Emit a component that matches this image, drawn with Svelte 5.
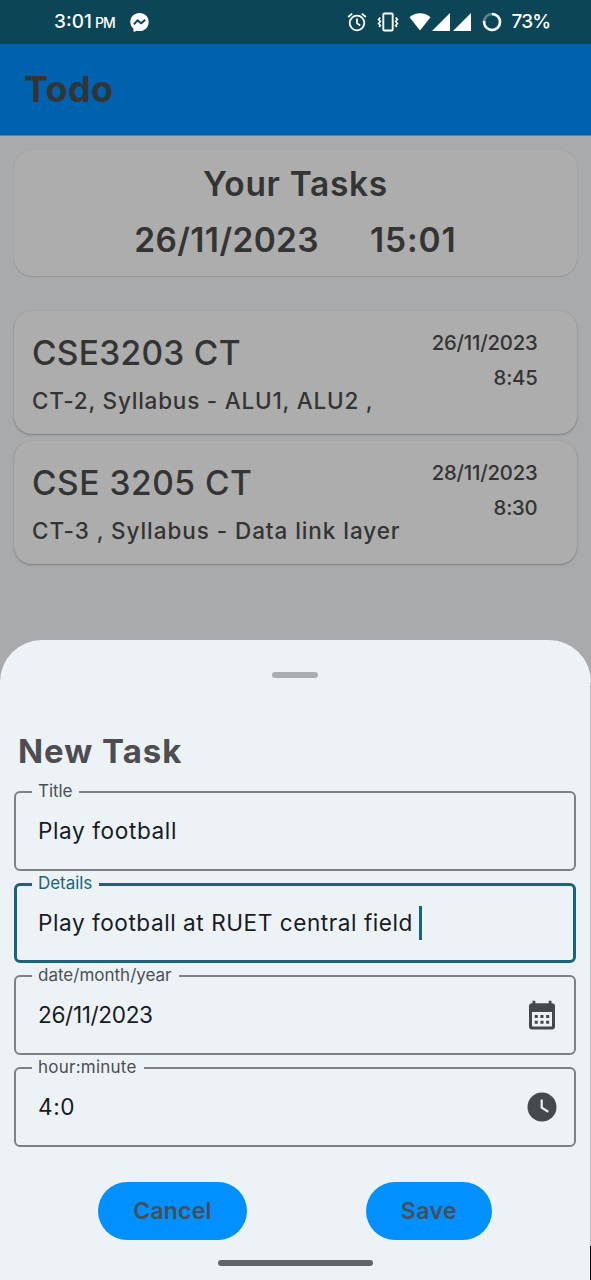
<script>
  const tasks = [
    { title: 'CSE3203 CT', details: 'CT-2, Syllabus - ALU1, ALU2 ,', date: '26/11/2023', time: '8:45', kind: 'first' },
    { title: 'CSE 3205 CT', details: 'CT-3 , Syllabus - Data link layer', date: '28/11/2023', time: '8:30', kind: 'second' }
  ];
  const fields = [
    { label: 'Title', value: 'Play football' },
    { label: 'Details', value: 'Play football at RUET central field', focused: true },
    { label: 'date/month/year', value: '26/11/2023', icon: 'calendar', numeric: true },
    { label: 'hour:minute', value: '4:0', icon: 'clock' }
  ];
</script>

<div class="screen">
  <header class="status">
    <span class="clock">3:01</span><span class="pm">PM</span>
    <svg class="messenger" width="19" height="19" viewBox="0 0 19 19">
      <path fill="#fff" d="M9.5 0C4.1 0 .3 3.9.3 8.9c0 2.700 1.200 5 3.100 6.600v2.600c0 .5.500.800 1 .6l2.200-1c.9.3 1.900.4 2.900.4 5.400 0 9.200-3.900 9.200-9.100S14.900 0 9.500 0z" />
      <path fill="none" stroke="#0c4556" stroke-width="2" stroke-linejoin="round" d="M3.900 11.300 7.500 7.300l3.700 3 4-3.600" />
    </svg>
    <div class="indicators">
      <svg class="alarm" width="20" height="20" viewBox="0 0 20 20" fill="none" stroke="#fff" stroke-width="1.800">
        <circle cx="10" cy="11" r="7.300" />
        <path d="M10 6.600v4.700l3.200 2.100M1.200 5 5.200 1.600M18.800 5l-4-3.400" />
      </svg>
      <svg class="vibrate" width="22" height="20" viewBox="0 0 22 20" fill="none" stroke="#fff" stroke-width="1.900">
        <rect x="6.300" y="1.500" width="9.400" height="17" rx="1" />
        <path stroke-width="1.700" d="M3.300 5.500 1.600 7.500l1.700 2-1.700 2 1.700 2-1.200 1.600M18.700 5.500l1.700 2-1.700 2 1.700 2-1.700 2 1.200 1.600" />
      </svg>
      <svg class="wifi" width="22" height="18" viewBox="0 0 22 18"><path fill="#fff" d="M.5 4.200C6-1 16-1 21.500 4.200L11 17.500z" /></svg>
      <svg class="signal" width="18" height="18" viewBox="0 0 18 18"><path fill="#fff" d="M18 0v18H0z" /></svg>
      <svg class="signal" width="18" height="18" viewBox="0 0 18 18"><path fill="#fff" d="M18 0v18H0z" /></svg>
      <svg class="battery" width="20" height="20" viewBox="0 0 20 20" fill="none" stroke-width="2.600">
        <circle cx="10" cy="10" r="8" stroke="#5f8590" />
        <path stroke="#fff" d="M10 2A8 8 0 1 1 2.100 9" />
      </svg>
      <span class="percent">73%</span>
    </div>
  </header>

  <div class="appbar"><h1>Todo</h1></div>

  <main>
    <section class="card summary">
      <div class="heading">Your Tasks</div>
      <div class="now"><span class="today">26/11/2023</span><span class="hour">15:01</span></div>
    </section>
    {#each tasks as task}
      <article class="card task {task.kind}">
        <div class="info">
          <div class="name">{task.title}</div>
          <div class="details">{task.details}</div>
        </div>
        <div class="due"><span class="date">{task.date}</span><span class="time">{task.time}</span></div>
      </article>
    {/each}
  </main>

  <section class="sheet">
    <div class="handle"></div>
    <h2>New Task</h2>
    <div class="fields">
      {#each fields as field}
        <div class="field" class:focused={field.focused}>
          <span class="label" class:tight={!field.icon} class:wide={field.icon === 'clock'}>{field.label}</span>
          <span class="value" class:numeric={field.numeric}>{field.value}</span>
          {#if field.focused}<i class="caret"></i>{/if}
          {#if field.icon === 'calendar'}
            <svg class="icon" width="30" height="30" viewBox="0 0 30 30">
              <path fill="#43494d" fill-rule="evenodd" d="M5.500.700h2.800v2.600h13.400V.700h2.800v2.600H25A3 3 0 0 1 28 6.300v20.200a3 3 0 0 1-3 3H5a3 3 0 0 1-3-3V6.300a3 3 0 0 1 3-3h.500zM5 12v13.500c0 .6.400 1 1 1h18c.6 0 1-.4 1-1V12z" />
              <path fill="#43494d" d="M7.700 15h3.100v3H7.700zm5.700 0h3.100v3h-3.100zm5.700 0h3.100v3h-3.100zM7.700 20.700h3.100v3H7.700zm5.700 0h3.100v3h-3.100zm5.700 0h3.100v3h-3.100z" />
            </svg>
          {:else if field.icon === 'clock'}
            <svg class="icon" width="30" height="30" viewBox="0 0 30 30">
              <circle cx="15" cy="15" r="14.500" fill="#43494d" />
              <path fill="none" stroke="#edf2f7" stroke-width="2.200" d="M14.700 7.500v8.200l6.600 4" />
            </svg>
          {/if}
        </div>
      {/each}
    </div>
    <div class="actions">
      <button class="cancel">Cancel</button>
      <button class="save">Save</button>
    </div>
    <div class="gesture"></div>
  </section>
  <div class="edge"></div>
</div>

<style>
  :global(body) { background: #a9aaad; }
  .screen {
    position: relative;
    display: flex;
    flex-direction: column;
    width: 591px;
    height: 1280px;
    overflow: hidden;
    background: #a9aaac;
    color: #343434;
    font-family: Inter, sans-serif;
    white-space: nowrap;
  }
  .status {
    box-sizing: border-box;
    display: flex;
    align-items: center;
    height: 44px;
    padding-left: 54px;
    background: #0c4556;
    color: #fff;
    font-size: 19px;
    font-weight: 500;
    line-height: 44px;
  }
  .clock { width: 41px; }
  .pm { width: 34.700px; font-size: 14px; letter-spacing: -1.100px; padding-top: 2px; }
  .messenger { margin-top: 1px; }
  .indicators { display: flex; align-items: center; margin-left: auto; width: 244px; }
  .vibrate { margin-left: 10px; }
  .wifi { margin-left: 10px; }
  .signal { margin-left: 1px; }
  .signal + .signal { margin-left: 3px; }
  .battery { margin-left: 11px; }
  .percent { margin-left: 9.500px; letter-spacing: -.900px; }
  .appbar {
    display: flex;
    align-items: center;
    height: 91px;
    padding-left: 24px;
    border-bottom: 1px solid #4b83b1;
    background: #0062ae;
  }
  h1 { margin: 0 0 1px; font-size: 36px; font-weight: 700; letter-spacing: .300px; }
  main { display: flex; flex-direction: column; padding: 14px 14px 0; }
  .card {
    box-sizing: border-box;
    border-radius: 18px;
    background: #adadad;
    box-shadow: 0 1px 2px rgba(70, 75, 80, .45), 0 0 1px rgba(90, 95, 100, .25);
  }
  .summary {
    display: flex;
    flex-direction: column;
    align-items: center;
    gap: 16px;
    height: 126px;
    margin-bottom: 35px;
    padding-top: 14px;
    font-size: 33.500px;
    font-weight: 600;
    line-height: 40px;
    box-shadow: 0 1px 1px rgba(70, 75, 80, .2), 0 0 1px rgba(90, 95, 100, .3);
  }
  .heading { letter-spacing: .680px; }
  .now { display: flex; gap: 51px; }
  .today { letter-spacing: .350px; }
  .hour { letter-spacing: .900px; }
  .task {
    display: flex;
    justify-content: space-between;
    height: 123px;
    margin-bottom: 7px;
    padding: 22px 39.500px 0 18px;
    font-weight: 500;
  }
  .name { font-size: 33.500px; line-height: 40px; letter-spacing: .280px; }
  .second .name { letter-spacing: .530px; }
  .details { margin-top: 13px; font-size: 22.500px; line-height: 30px; letter-spacing: .780px; }
  .second .details { letter-spacing: .930px; }
  .due {
    display: flex;
    flex-direction: column;
    align-items: flex-end;
    gap: 9px;
    margin-top: -3px;
    font-size: 20.300px;
    line-height: 26px;
    letter-spacing: -.210px;
  }
  .sheet {
    position: absolute;
    inset: 640px 0 0 0;
    box-sizing: border-box;
    display: flex;
    flex-direction: column;
    padding: 32px 15px 0 14px;
    border-radius: 42px 42px 0 0;
    background: #edf2f7;
    color: #4f4d4f;
  }
  .handle { width: 46px; height: 6px; margin-left: 258px; border-radius: 3px; background: #aaaeb2; }
  h2 { margin: 53px 0 20px 4px; font-size: 33px; font-weight: 700; line-height: 40px; letter-spacing: .970px; }
  .fields { display: flex; flex-direction: column; gap: 12px; }
  .field {
    position: relative;
    box-sizing: border-box;
    display: flex;
    align-items: center;
    height: 80px;
    padding: 0 17px 0 22px;
    border: 2px solid #7b8186;
    border-radius: 6px;
    color: #171c1f;
    font-size: 22.600px;
  }
  .focused { border: 3px solid #186578; padding-left: 21px; }
  .label {
    position: absolute;
    top: -14px;
    left: 16px;
    padding: 0 7px 0 6px;
    background: #edf2f7;
    color: #4a5054;
    font-size: 17px;
    line-height: 24px;
  }
  .tight { letter-spacing: -.050px; }
  .wide { letter-spacing: .240px; }
  .focused .label { left: 15px; top: -15px; color: #186578; }
  .value { padding-bottom: 2px; letter-spacing: .600px; }
  .focused .value { letter-spacing: .540px; }
  .value.numeric { letter-spacing: -.350px; }
  .caret { width: 3px; height: 34px; margin-left: 6px; background: #186578; }
  .icon { margin-left: auto; }
  .actions { display: flex; padding: 35px 0 0 84px; }
  button {
    height: 58px;
    padding: 0;
    border: 0;
    border-radius: 29px;
    background: #0090ff;
    color: #454f59;
    font: 600 23px Inter, sans-serif;
  }
  .cancel { width: 149px; letter-spacing: .200px; }
  .save { width: 126px; margin-left: 119px; letter-spacing: .450px; }
  .gesture { width: 155px; height: 6px; margin: 20px 0 0 204px; border-radius: 3px; background: #626567; }
  .edge {
    position: absolute;
    top: 682px;
    right: 0;
    bottom: 0;
    width: 1px;
    background: linear-gradient(#b9bdc2 564px, #000 564px);
  }
</style>
